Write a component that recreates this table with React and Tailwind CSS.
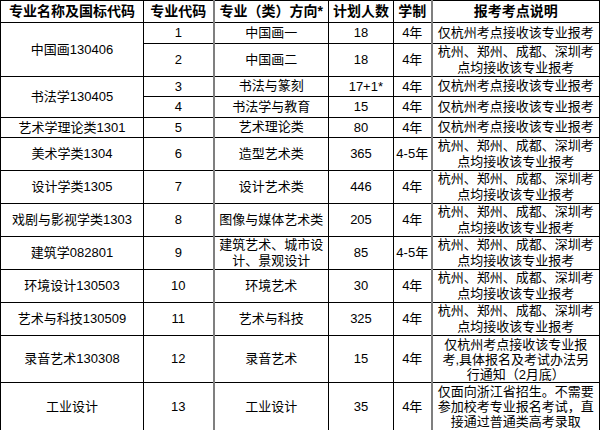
const rows = [
  { major: '中国画130406', span: 2, code: '1', dir: ['中国画一'], num: '18', years: '4年', note: ['仅杭州考点接收该专业报考'], h: 'h-[18px]' },
  { code: '2', dir: ['中国画二'], num: '18', years: '4年', note: ['杭州、郑州、成都、深圳考', '点均接收该专业报考'], h: 'h-[33px]' },
  { major: '书法学130405', span: 2, code: '3', dir: ['书法与篆刻'], num: '17+1*', right: true, years: '4年', note: ['仅杭州考点接收该专业报考'], h: 'h-[18px]' },
  { code: '4', dir: ['书法学与教育'], num: '15', years: '4年', note: ['仅杭州考点接收该专业报考'], h: 'h-[19px]' },
  { major: '艺术学理论类1301', code: '5', dir: ['艺术理论类'], num: '80', years: '4年', note: ['仅杭州考点接收该专业报考'], h: 'h-[18px]' },
  { major: '美术学类1304', code: '6', dir: ['造型艺术类'], num: '365', years: '4-5年', note: ['杭州、郑州、成都、深圳考', '点均接收该专业报考'], h: 'h-[33px]' },
  { major: '设计学类1305', code: '7', dir: ['设计艺术类'], num: '446', years: '4年', note: ['杭州、郑州、成都、深圳考', '点均接收该专业报考'], h: 'h-[32px]' },
  { major: '戏剧与影视学类1303', code: '8', dir: ['图像与媒体艺术类'], num: '205', years: '4年', note: ['杭州、郑州、成都、深圳考', '点均接收该专业报考'], h: 'h-[31px]' },
  { major: '建筑学082801', code: '9', dir: ['建筑艺术、城市设', '计、景观设计'], num: '85', years: '4-5年', note: ['杭州、郑州、成都、深圳考', '点均接收该专业报考'], h: 'h-[32px]' },
  { major: '环境设计130503', code: '10', dir: ['环境艺术'], num: '30', years: '4年', note: ['杭州、郑州、成都、深圳考', '点均接收该专业报考'], h: 'h-[33px]' },
  { major: '艺术与科技130509', code: '11', dir: ['艺术与科技'], num: '325', years: '4年', note: ['杭州、郑州、成都、深圳考', '点均接收该专业报考'], h: 'h-[32px]' },
  { major: '录音艺术130308', code: '12', dir: ['录音艺术'], num: '15', years: '4年', note: ['仅杭州考点接收该专业报', '考,具体报名及考试办法另', '行通知（2月底）'], h: 'h-[47px]' },
  { major: '工业设计', code: '13', dir: ['工业设计'], num: '35', years: '4年', note: ['仅面向浙江省招生。不需要', '参加校考专业报名考试，直', '接通过普通类高考录取'], h: 'h-[48px]' }
]

const cell = 'border border-black p-0 text-center align-middle'

const Lines = ({ lines }) => (
  <div className={lines.length > 2 ? 'leading-[15px]' : 'leading-[16px]'}>
    {lines.map((l, i) => (
      <div key={i} className="whitespace-nowrap">{l}</div>
    ))}
  </div>
)

export default function App() {
  return (
    <div className="w-[600px] h-[430px] bg-white overflow-hidden">
      <table className="table-fixed border-collapse w-[599px] text-[13px] text-black font-['Liberation_Sans','Noto_Sans_CJK_SC',sans-serif]">
        <colgroup>
          <col className="w-[143px]" />
          <col className="w-[70px]" />
          <col className="w-[115px]" />
          <col className="w-[65px]" />
          <col className="w-[38px]" />
          <col className="w-[168px]" />
        </colgroup>
        <thead>
          <tr className="h-[20px] text-[14px] font-bold">
            <th className={cell}>专业名称及国标代码</th>
            <th className={`${cell} border-r-2 border-r-[#7f7f7f]`}>专业代码</th>
            <th className={`${cell} whitespace-nowrap`}>专业（类）方向*</th>
            <th className={cell}>计划人数</th>
            <th className={`${cell} border-r-2 border-r-[#7f7f7f]`}>学制</th>
            <th className={cell}>报考考点说明</th>
          </tr>
        </thead>
        <tbody>
          {rows.map((r, i) => (
            <tr key={i} className={r.h}>
              {r.major && (
                <td rowSpan={r.span || 1} className={cell}>{r.major}</td>
              )}
              <td className={`${cell} border-r-2 border-r-[#7f7f7f]`}>{r.code}</td>
              <td className={cell}><Lines lines={r.dir} /></td>
              <td className={`${cell} ${r.right ? 'text-right pr-[10px]' : ''}`}>{r.num}</td>
              <td className={`${cell} whitespace-nowrap border-r-2 border-r-[#7f7f7f]`}>{r.years}</td>
              <td className={cell}><Lines lines={r.note} /></td>
            </tr>
          ))}
        </tbody>
      </table>
    </div>
  )
}
